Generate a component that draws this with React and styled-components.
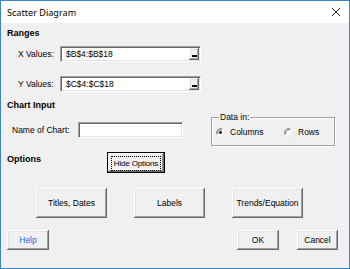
import React from 'react';
import styled, { createGlobalStyle } from 'styled-components';

const GlobalStyle = createGlobalStyle`
  html, body {
    margin: 0;
    padding: 0;
    background: #ffffff;
  }
`;

const raised = `
  box-shadow:
    inset -1px -1px 0 #696969,
    inset 1px 1px 0 #ffffff,
    inset -2px -2px 0 #a0a0a0,
    inset 2px 2px 0 #e3e3e3;
`;

const Window = styled.div`
  width: 350px;
  height: 269px;
  box-sizing: border-box;
  border: 1px solid #3b86c9;
  background: #f0f0f0;
  display: flex;
  flex-direction: column;
  font-family: "Liberation Sans", Arial, sans-serif;
  font-size: 8.5px;
  color: #000;
`;

const TitleBar = styled.div`
  height: 22px;
  flex: none;
  background: #fff;
  display: flex;
  align-items: center;
  justify-content: space-between;
  padding: 0 8px 0 6px;
  font-family: "Noto Sans", "Open Sans", sans-serif;
  font-size: 9.1px;
`;

const Body = styled.div`
  flex: 1;
  display: flex;
  flex-direction: column;
  padding: 4px 0 0 6px;
`;

const Heading = styled.div`
  font-weight: bold;
  font-size: 9px;
  line-height: 12px;
  height: 12px;
  margin-top: ${p => p.$top || 0}px;
`;

const FieldRow = styled.div`
  display: flex;
  align-items: center;
  height: 16px;
  margin-top: ${p => p.$top || 0}px;
  padding-left: ${p => p.$indent || 0}px;
`;

const Label = styled.span`
  width: ${p => p.$w}px;
  flex: none;
`;

const TextBox = styled.div`
  width: ${p => p.$w}px;
  height: 16px;
  box-sizing: border-box;
  background: #fff;
  display: flex;
  align-items: center;
  justify-content: space-between;
  padding: 0 1px 0 5px;
  border-top: 1px solid #a0a0a0;
  border-left: 1px solid #a0a0a0;
  border-right: 1px solid #ffffff;
  border-bottom: 1px solid #ffffff;
  box-shadow: inset 1px 1px 0 #696969, inset -1px -1px 0 #e3e3e3;
`;

const RefButton = styled.span`
  width: 10px;
  height: 12px;
  box-sizing: border-box;
  background: #f0f0f0;
  display: flex;
  align-items: flex-end;
  justify-content: center;
  padding-bottom: 3px;
  ${raised}

  &::after {
    content: '';
    width: 5px;
    height: 2px;
    background: #000;
  }
`;

const ChartRow = styled.div`
  display: flex;
  align-items: flex-start;
  margin-top: 1px;
  height: 35px;
`;

const NameField = styled(FieldRow)`
  margin-top: 10px;
  padding-left: 5px;
`;

const Frame = styled.fieldset`
  margin: 0 0 0 28px;
  padding: 4px 0 7px 4px;
  width: 124px;
  box-sizing: border-box;
  border: 1px solid #a0a0a0;
  box-shadow: 1px 1px 0 #fff, inset 1px 1px 0 #fff;
  display: flex;
  align-items: center;
`;

const Legend = styled.legend`
  padding: 0 1px;
  margin-left: 3px;
  line-height: 10px;
`;

const Radio = styled.label`
  display: flex;
  align-items: center;
  gap: 5px;
  width: ${p => p.$w || 'auto'};
  height: 12px;
`;

const RadioDot = ({ checked }) => (
  <svg width="9" height="9" viewBox="0 0 9 9">
    <circle cx="4.5" cy="4.5" r="4" fill="#fff" />
    <path d="M1 6.5 A4 4 0 0 1 6.5 1" stroke="#a0a0a0" strokeWidth="1" fill="none" />
    <path d="M1.8 6 A3.2 3.2 0 0 1 6 1.8" stroke="#696969" strokeWidth="1" fill="none" />
    <path d="M8 2.5 A4 4 0 0 1 2.5 8" stroke="#e3e3e3" strokeWidth="1" fill="none" />
    {checked && <circle cx="4.5" cy="4.5" r="1.4" fill="#000" />}
  </svg>
);

const OptionsRow = styled.div`
  display: flex;
  align-items: flex-start;
  margin-top: 5px;
`;

const OptionsLabel = styled(Heading)`
  width: 100px;
  margin-top: 1px;
`;

const Button = styled.button`
  width: ${p => p.$w || 42}px;
  height: ${p => p.$h || 20}px;
  margin-left: ${p => p.$gap || 0}px;
  padding: 0;
  border: none;
  background: #f0f0f0;
  font-family: inherit;
  font-size: 8.5px;
  color: ${p => (p.$link ? '#1a6fd6' : '#000')};
  white-space: nowrap;
  flex: none;
  ${raised}
`;

const DefaultButton = styled.button`
  width: 58px;
  height: 21px;
  padding: 3px;
  box-sizing: border-box;
  border: 1px solid #000;
  background: #f0f0f0;
  font-family: inherit;
  font-size: 8px;
  letter-spacing: -0.15px;
  color: #000;
  white-space: nowrap;
  box-shadow:
    inset -1px -1px 0 #696969,
    inset 1px 1px 0 #ffffff,
    inset -2px -2px 0 #a0a0a0;

  span {
    display: flex;
    align-items: center;
    justify-content: center;
    height: 100%;
    border: 1px dotted #000;
  }
`;

const ButtonRow = styled.div`
  display: flex;
  gap: 27px;
  margin-top: 15px;
  padding-left: 29px;
`;

const Footer = styled.div`
  display: flex;
  align-items: center;
  margin-top: 12px;
  padding-right: 11px;
`;

const Spacer = styled.div`
  flex: 1;
`;

const CloseIcon = () => (
  <svg width="10" height="10" viewBox="0 0 10 10">
    <path d="M1 1 L9 9 M9 1 L1 9" stroke="#222" strokeWidth="1" />
  </svg>
);

export default function App() {
  return (
    <>
      <GlobalStyle />
      <Window>
        <TitleBar>
          <span>Scatter Diagram</span>
          <CloseIcon />
        </TitleBar>
        <Body>
          <Heading>Ranges</Heading>
          <FieldRow $top={7} $indent={11}>
            <Label $w={42}>X Values:</Label>
            <TextBox $w={141}>
              $B$4:$B$18
              <RefButton />
            </TextBox>
          </FieldRow>
          <FieldRow $top={14} $indent={11}>
            <Label $w={42}>Y Values:</Label>
            <TextBox $w={141}>
              $C$4:$C$18
              <RefButton />
            </TextBox>
          </FieldRow>

          <Heading $top={7}>Chart Input</Heading>
          <ChartRow>
            <NameField>
              <Label $w={66}>Name of Chart:</Label>
              <TextBox $w={105} />
            </NameField>
            <Frame>
              <Legend>Data in:</Legend>
              <Radio $w="68px">
                <RadioDot checked />
                Columns
              </Radio>
              <Radio>
                <RadioDot />
                Rows
              </Radio>
            </Frame>
          </ChartRow>

          <OptionsRow>
            <OptionsLabel>Options</OptionsLabel>
            <DefaultButton>
              <span>Hide Options</span>
            </DefaultButton>
          </OptionsRow>

          <ButtonRow>
            <Button $w={71} $h={30}>Titles, Dates</Button>
            <Button $w={71} $h={30}>Labels</Button>
            <Button $w={71} $h={30}>Trends/Equation</Button>
          </ButtonRow>

          <Footer>
            <Button $link>Help</Button>
            <Spacer />
            <Button>OK</Button>
            <Button $w={41} $gap={18}>Cancel</Button>
          </Footer>
        </Body>
      </Window>
    </>
  );
}
